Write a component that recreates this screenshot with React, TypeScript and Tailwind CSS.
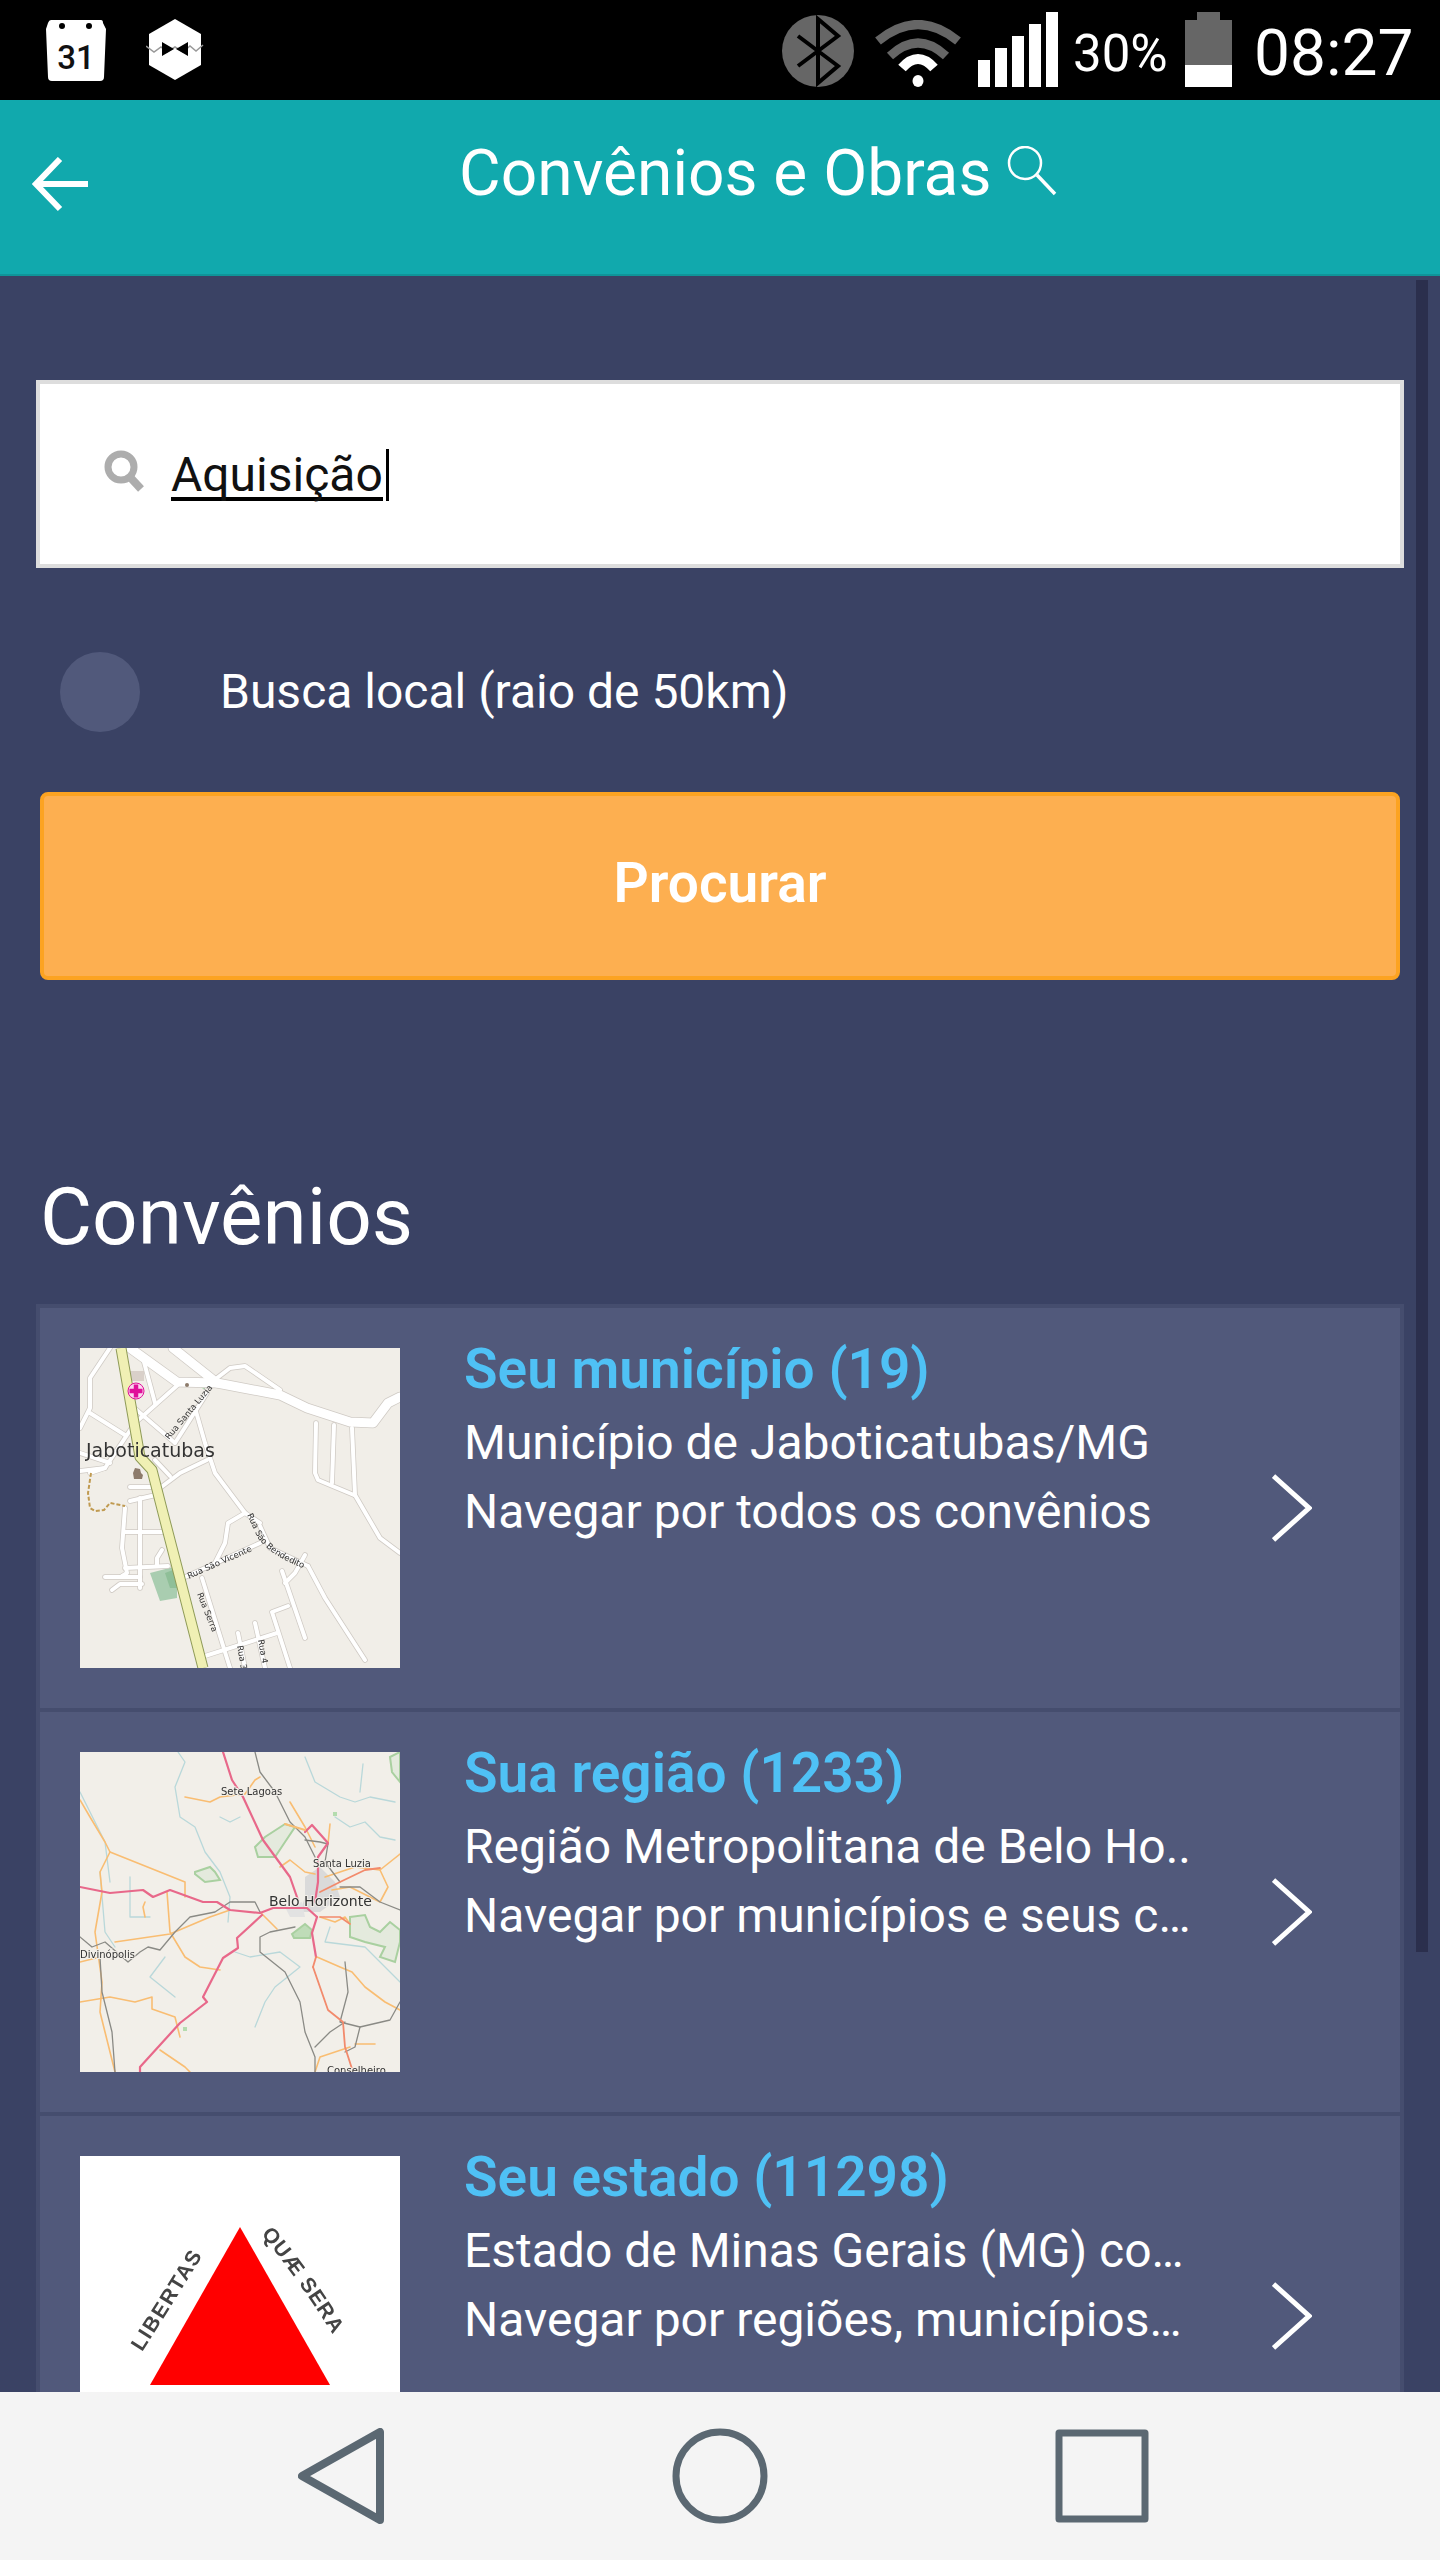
import React from "react";

const roboto = { fontFamily: "Roboto, 'Liberation Sans', sans-serif" };

function Calendar() {
  return (
    <svg width="62" height="62" viewBox="0 0 62 62" className="shrink-0">
      <path d="M6 1 H56 Q58 1 58 4 L61 10 L59 58 Q59 62 55 62 H7 Q3 62 3 58 L1 10 L3 4 Q4 1 6 1Z" fill="#fff" />
      <circle cx="17" cy="7" r="3" fill="#000" />
      <circle cx="44" cy="7" r="3" fill="#000" />
      <text x="31" y="50" textAnchor="middle" fontFamily="Roboto, sans-serif" fontWeight="500" fontSize="33" fill="#111">31</text>
    </svg>
  );
}

function Hex() {
  return (
    <svg width="58" height="64" viewBox="0 0 58 64" className="shrink-0">
      <path d="M29 1 L55 16 V47 L29 62 L3 47 V16Z" fill="#fff" />
      <path d="M0 26 L8 32 L15 27 L21 32 L29 27 L37 32 L44 26 L50 31 L57 25" fill="none" stroke="#999" strokeWidth="1.5" transform="translate(0 2)" />
      <path d="M16 24 L28 31 L16 38Z M42 24 L30 31 L42 38Z" fill="#000" />
    </svg>
  );
}

function Bluetooth() {
  return (
    <svg width="72" height="72" viewBox="0 0 72 72" className="shrink-0">
      <circle cx="36" cy="36" r="36" fill="#666" />
      <path d="M16 21 L56 51 L36 68 V4 L56 21 L16 51" fill="none" stroke="#000" strokeWidth="4" />
    </svg>
  );
}

function Wifi() {
  return (
    <svg width="88" height="67" viewBox="0 0 88 67" className="shrink-0">
      <path d="M4 21 Q44 -12 84 21" fill="none" stroke="#666" strokeWidth="9" />
      <path d="M16 36 Q44 10 72 36" fill="none" stroke="#666" strokeWidth="9" />
      <path d="M28 48 Q44 30 60 48" fill="none" stroke="#fff" strokeWidth="10" />
      <ellipse cx="44" cy="61" rx="5.5" ry="6" fill="#fff" />
    </svg>
  );
}

function Signal() {
  return (
    <div className="flex items-end gap-[5px] h-[75px] shrink-0">
      <div className="w-[12px] h-[27px] bg-white" />
      <div className="w-[12px] h-[39px] bg-white" />
      <div className="w-[12px] h-[51px] bg-white" />
      <div className="w-[12px] h-[63px] bg-white" />
      <div className="w-[12px] h-[75px] bg-white" />
    </div>
  );
}

function Battery() {
  return (
    <div className="flex flex-col items-center w-[47px] h-[75px] shrink-0">
      <div className="w-[23px] h-[8px] bg-[#666]" />
      <div className="w-full h-[45px] bg-[#666]" />
      <div className="w-full h-[22px] bg-white" />
    </div>
  );
}

type Line = [string, string, number];

function Map1() {
  const white: [string, number][] = [
    ["M50 0 L97 34 L137 35 L163 40 L200 47 L227 60 L270 74 L293 75 L308 55 L320 49", 9],
    ["M93 0 L127 27 L137 35", 9],
    ["M137 30 L150 20 L165 18 L200 42", 4],
    ["M30 0 L10 30 L10 60 L0 80", 4],
    ["M10 65 L45 87", 4],
    ["M64 14 L75 55", 4],
    ["M100 35 L55 75 L25 120 L10 125", 4],
    ["M52 58 L95 95", 4],
    ["M95 95 L127 45", 4],
    ["M115 60 L125 95 L135 125 L165 165 L180 175", 4],
    ["M0 105 L30 115", 4],
    ["M0 123 L25 120", 4],
    ["M75 112 L90 128", 4],
    ["M80 140 L100 125 L127 112", 4],
    ["M50 139 L72 139", 4],
    ["M50 153 L80 146", 4],
    ["M45 160 L42 200 L47 225 L42 228", 4],
    ["M60 150 L60 240", 4],
    ["M44 184 L82 184", 4],
    ["M45 220 L88 218", 4],
    ["M25 229 L60 229", 4],
    ["M32 242 L40 236 L62 236", 4],
    ["M82 202 L77 210 L77 218", 4],
    ["M165 165 L148 175 L145 195 L135 215", 4],
    ["M103 230 L180 195", 4],
    ["M122 230 L150 320", 4],
    ["M180 178 L190 200 L228 218", 4],
    ["M202 223 L225 290", 4],
    ["M225 207 L215 225 L205 235", 4],
    ["M228 218 L245 250 L285 312", 4],
    ["M208 258 L192 264 L210 320", 4],
    ["M125 308 L197 285", 4],
    ["M158 285 L165 320", 4],
    ["M175 275 L185 320", 4],
    ["M236 75 L235 125 L238 132 L274 147", 4],
    ["M254 77 L252 135", 4],
    ["M272 80 L275 147 L300 190 L320 205", 4],
  ];
  return (
    <svg width="320" height="320" viewBox="0 0 320 320" className="shrink-0 blur-[0.4px] bg-[#f1eee8]">
      <defs>
        <path id="bendedito" d="M167 167 L178 190 Q190 208 228 222" />
      </defs>
      <path d="M50 23 h14 v10 h-12z" fill="#d9d0c9" />
      <path d="M115 33 l10 -2 l6 7 l-8 3z" fill="#b8e8b8" />
      <path d="M70 225 L97 218 L97 250 L80 253 Z" fill="#a9cdb0" />
      <path d="M85 225 L93 222 L97 240 L90 240 Z" fill="#8fbf98" />
      {white.map(([d, w], i) => (
        <path key={"c" + i} d={d} fill="none" stroke="#cfcac4" strokeWidth={w + 1.5} strokeLinejoin="round" strokeLinecap="round" />
      ))}
      {white.map(([d, w], i) => (
        <path key={"w" + i} d={d} fill="none" stroke="#fff" strokeWidth={w} strokeLinejoin="round" strokeLinecap="round" />
      ))}
      <path d="M41 0 L50 52 L60 109 L72 122 L83 165 L97 219 L123 320" fill="none" stroke="#8f9b58" strokeWidth="11" strokeLinejoin="round" />
      <path d="M41 0 L50 52 L60 109 L72 122 L83 165 L97 219 L123 320" fill="none" stroke="#f0f0b4" strokeWidth="9" strokeLinejoin="round" />
      <path d="M11 125 L8 145 L10 160 L15 163 L24 162 L30 155 L45 158" fill="none" stroke="#c09a50" strokeWidth="2" strokeDasharray="4 2" />
      <path d="M55 120 l5 1 l1 4 l2 2 l-1 4 l-8 0 l-1 -6z" fill="#8d7b6b" />
      <circle cx="107" cy="37" r="2" fill="#8d7b6b" />
      <circle cx="56" cy="43" r="8" fill="#fbd8ef" stroke="#e0109a" strokeWidth="1" />
      <path d="M49.5 43 h13 M56 36.5 v13" stroke="#e0109a" strokeWidth="4.5" />
      <text x="6" y="109" fontFamily="'DejaVu Sans', sans-serif" fontSize="19" fill="#333">Jaboticatubas</text>
      <g fontFamily="'DejaVu Sans', sans-serif" fontSize="8.5" fill="#333">
        <text transform="translate(89 92) rotate(-50)">Rua Santa Luzia</text>
        <text><textPath href="#bendedito">Rua São Bendedito</textPath></text>
        <text transform="translate(109 231) rotate(-24)">Rua São Vicente</text>
        <text transform="translate(117 246) rotate(68)">Rua Serra</text>
        <text transform="translate(157 298) rotate(80)">Rua 3</text>
        <text transform="translate(178 292) rotate(80)">Rua 4</text>
      </g>
    </svg>
  );
}

function Map2() {
  const lines: Line[] = [
    ["M98 0 L105 10 L95 35 L100 65 L115 75 L125 100 L140 120 L150 145 L148 170", "#b9d8da", 1.3],
    ["M140 65 L150 70 L160 65", "#b9d8da", 1.3],
    ["M225 5 L235 30 L260 45 L275 50 L290 45 L315 50", "#b9d8da", 1.3],
    ["M283 12 L280 40", "#b9d8da", 1.3],
    ["M255 65 L270 75 L285 70 L300 85 L315 88", "#b9d8da", 1.3],
    ["M50 125 L50 165 L70 165", "#b9d8da", 1.3],
    ["M20 120 L25 180 L35 195", "#b9d8da", 1.3],
    ["M85 205 L70 225 L95 245", "#b9d8da", 1.3],
    ["M155 200 L170 205 L200 200 L220 215 L195 235 L185 250 L175 275", "#b9d8da", 1.3],
    ["M250 175 L245 190 L285 195 L320 230", "#b9d8da", 1.3],
    ["M0 40 L25 90 L30 130", "#b9d8da", 1.3],
    ["M0 48 L10 65 L25 90 L30 100 L60 112 L80 120 L105 130 L105 145", "#f9bd72", 1.6],
    ["M30 100 L20 120 L22 140 L15 180 L22 230 L20 260 L35 320", "#f9bd72", 1.6],
    ["M0 250 L30 245 L55 250 L72 245 L72 257 L95 265 L100 285", "#f9bd72", 1.6],
    ["M105 45 L115 47 L130 50 L140 45 L165 42 L175 28 L180 25", "#f9bd72", 1.6],
    ["M35 190 L90 182 L130 165 L150 158", "#f9bd72", 1.6],
    ["M87 140 L90 180 L105 205 L120 215 L140 218", "#f9bd72", 1.6],
    ["M65 150 L63 155 L65 165", "#f9bd72", 1.6],
    ["M0 210 L20 205", "#f9bd72", 1.6],
    ["M80 298 L105 315 L110 320", "#f9bd72", 1.6],
    ["M200 115 L210 108 L225 120 L235 122", "#f9bd72", 1.6],
    ["M245 125 L275 115 L300 118 L308 135 L300 150 L270 135 L252 138", "#f9bd72", 1.6],
    ["M300 118 L320 102", "#f9bd72", 1.6],
    ["M237 205 L260 215 L272 220 L285 235 L305 250 L320 258", "#f9bd72", 1.6],
    ["M240 165 L255 170 L265 165 L270 172", "#f9bd72", 1.6],
    ["M180 160 L190 170 L197 177", "#f9bd72", 1.6],
    ["M210 50 L225 75 L235 95", "#f9bd72", 1.6],
    ["M250 72 L248 92", "#f9bd72", 1.6],
    ["M235 320 L240 305 L270 295", "#f9bd72", 1.6],
    ["M275 292 L295 292", "#f9bd72", 1.6],
    ["M175 0 L180 20 L195 40 L210 70 L225 85 L235 105", "#8a8a85", 1.3],
    ["M0 185 L12 195 L25 190 L48 210 L60 200 L68 195 L80 198 L95 180 L110 165 L135 160 L150 150 L175 150 L180 160", "#8a8a85", 1.3],
    ["M20 205 L22 240 L32 280 L35 320", "#8a8a85", 1.3],
    ["M215 175 L190 180 L180 185 L180 200 L205 220 L220 250 L225 280 L235 305 L235 320", "#8a8a85", 1.3],
    ["M265 210 L268 240 L260 270 L280 275 L310 268 L320 250", "#8a8a85", 1.3],
    ["M235 295 L250 280 L265 270", "#8a8a85", 1.3],
    ["M280 275 L275 295 L265 300", "#8a8a85", 1.3],
    ["M260 135 L280 135 L300 150 L320 158", "#8a8a85", 1.3],
    ["M225 88 L240 90 L248 92 L245 110 L260 130", "#8a8a85", 1.3],
    ["M143 0 L152 28 L163 45 L183 88 L210 125 L218 148", "#e8688a", 2.2],
    ["M0 135 L30 141 L63 138 L73 145 L90 138 L123 150 L137 150 L150 158 L180 161 L193 156 L227 156 L237 165", "#e8688a", 2.2],
    ["M182 163 L157 186 L158 196 L143 206 L123 245 L127 250 L100 271 L60 315 L60 320", "#e8688a", 2.2],
    ["M237 165 L232 181 L236 205", "#e8688a", 2.2],
    ["M225 80 L232 73 L248 91 L238 105 L238 130 L235 150", "#e8688a", 2.2],
    ["M205 72 L225 78", "#f9bd72", 2],
    ["M240 140 L260 130 L285 118 L300 116", "#f28a6c", 1.8],
    ["M233 215 L248 258 L263 270 L265 295 L273 320", "#f28a6c", 1.8],
    ["M236 205 L233 215", "#f28a6c", 1.8],
    ["M240 165 L260 165 L270 172", "#f28a6c", 1.6],
  ];
  return (
    <svg width="320" height="320" viewBox="0 0 320 320" className="shrink-0 blur-[0.4px] bg-[#f2efe9]">
      <g fill="#e4eadd" stroke="#a9d0a0" strokeWidth="2">
        <path d="M175 95 L185 85 L205 72 L215 75 L205 90 L195 105 L190 105 L178 105Z" />
        <path d="M115 120 L130 115 L135 120 L140 128 L125 130 L115 122Z" />
        <path d="M270 165 L285 163 L290 175 L300 180 L310 170 L320 178 L320 190 L315 210 L300 205 L305 195 L285 190 L270 185Z" />
        <path d="M212 182 L225 172 L232 178 L230 186 L214 186Z" fill="#bfdcb8" />
        <path d="M310 5 L320 0 L320 30 L312 20Z" />
      </g>
      <path d="M225 125 L240 115 L255 130 L260 145 L240 160 L220 160 L225 145Z" fill="#dadada" />
      <path d="M205 155 L222 150 L225 165 L210 165Z" fill="#e2e2e2" />
      <path d="M103 275 h4 v4 h-4z M253 60 h4 v4 h-4z" fill="#b4dcae" />
      {lines.map(([d, c, w], i) => (
        <path key={i} d={d} fill="none" stroke={c} strokeWidth={w} strokeLinejoin="round" strokeLinecap="round" />
      ))}
      <g fontFamily="'DejaVu Sans', sans-serif" fill="#333" stroke="#f2efe9" strokeWidth="2" paintOrder="stroke">
        <text x="141" y="43" fontSize="10">Sete Lagoas</text>
        <text x="233" y="115" fontSize="10">Santa Luzia</text>
        <text x="189" y="154" fontSize="14">Belo Horizonte</text>
        <text x="0" y="206" fontSize="10">Divinópolis</text>
        <text x="247" y="322" fontSize="10">Conselheiro</text>
      </g>
    </svg>
  );
}

function Map3() {
  return (
    <svg width="320" height="320" viewBox="0 0 320 320" className="shrink-0 bg-white">
      <path d="M160 71 L250 229 H70Z" fill="#f00" className="blur-[0.4px]" />
      <defs>
        <path id="libertas" d="M62 196 Q96 143 132 84" />
        <path id="quae" d="M181 78 Q228 135 270 207" />
      </defs>
      <g fontFamily="'Liberation Sans', sans-serif" fontSize="21" fontWeight="700" fill="#444" className="blur-[0.7px]">
        <text letterSpacing="1.5"><textPath href="#libertas">LIBERTAS</textPath></text>
        <text letterSpacing="1"><textPath href="#quae">QUÆ SERA</textPath></text>
        <text x="160" y="250" textAnchor="middle" letterSpacing="3">TAMEN</text>
      </g>
    </svg>
  );
}

function Chevron() {
  return (
    <svg width="40" height="68" viewBox="0 0 40 68" className="shrink-0">
      <path d="M1.5 2 L37 34 L1.5 66" fill="none" stroke="#fff" strokeWidth="5" />
    </svg>
  );
}

function Card({ map, title, l1, l2, first }: { map: React.ReactNode; title: string; l1: string; l2: string; first?: boolean }) {
  return (
    <div className={first ? "flex h-[400px] bg-[#51597b] pl-[40px] shrink-0" : "flex h-[400px] bg-[#51597b] pl-[40px] mt-[4px] shrink-0"}>
      <div className="pt-[40px]">{map}</div>
      <div className="flex flex-col pl-[64px] pt-[25px] w-[872px] text-[48px] text-white whitespace-nowrap">
        <div className="text-[#4fc1f5] font-semibold text-[55px] leading-[72px]">{title}</div>
        <div className="leading-[75px]">{l1}</div>
        <div className="leading-[63px]">{l2}</div>
      </div>
      <div className="flex items-center">
        <Chevron />
      </div>
    </div>
  );
}

export default function App() {
  return (
    <div className="w-[1440px] h-[2560px] flex flex-col overflow-hidden bg-[#3a4264]" style={roboto}>
      <div className="h-[100px] bg-black flex items-center justify-between pl-[45px] pr-[30px] shrink-0">
        <div className="flex items-center gap-[39px]">
          <Calendar />
          <Hex />
        </div>
        <div className="flex items-end h-[75px] mt-[-1px] text-white">
          <div className="self-end"><Bluetooth /></div>
          <div className="ml-[20px] self-end"><Wifi /></div>
          <div className="ml-[16px]"><Signal /></div>
          <div className="ml-[15px] self-center text-[51px] leading-[52px] w-[94px] text-center mt-[8px]">30%</div>
          <div className="ml-[18px]"><Battery /></div>
          <div className="ml-[22px] self-center text-[64px] leading-[64px] mt-[8px] w-[156px] text-center whitespace-nowrap">08:27</div>
        </div>
      </div>

      <div className="h-[176px] bg-[#11a9ad] border-b-2 border-[#0f9599] flex items-start pl-[32px] shrink-0">
        <svg width="56" height="56" viewBox="0 0 56 56" className="mt-[57px] shrink-0">
          <path d="M28 2 L4 27 L28 52 M4 27 H56" fill="none" stroke="#fff" strokeWidth="6" />
        </svg>
        <div className="ml-[371px] mt-[39px] text-[64px] leading-[70px] text-white whitespace-nowrap">Convênios e Obras</div>
        <svg width="50" height="50" viewBox="0 0 50 50" className="ml-[16px] mt-[46px] shrink-0">
          <circle cx="18" cy="17" r="16" fill="none" stroke="#fff" strokeWidth="2.5" />
          <path d="M30 29 L48 48" stroke="#fff" strokeWidth="3.5" fill="none" />
        </svg>
      </div>

      <main className="relative flex-1 overflow-hidden">
        <div className="absolute left-[1416px] top-[4px] w-[12px] h-[1672px] bg-[#2b2f4d]" />
        <div className="w-[1368px] ml-[36px] pt-[104px] flex flex-col">
          <div className="h-[188px] bg-white border-4 border-[#dddddd] flex items-center pl-[64px]">
            <svg width="42" height="42" viewBox="0 0 42 42" className="shrink-0 mt-[-6px]">
              <circle cx="17" cy="17" r="13" fill="none" stroke="#adadad" strokeWidth="7" />
              <path d="M25 26 L37 39" stroke="#adadad" strokeWidth="8" fill="none" />
            </svg>
            <div className="relative ml-[25px] h-[52px] mt-[2px] flex items-start">
              <span className="text-[48px] leading-[52px] text-[#111] border-b-4 border-black h-[52px] block">Aquisição</span>
              <span className="w-[3px] h-[52px] bg-black ml-[3px] block" />
            </div>
          </div>
          <div className="flex items-center h-[80px] mt-[84px] pl-[24px]">
            <div className="w-[80px] h-[80px] rounded-full bg-[#51597b] shrink-0" />
            <div className="ml-[80px] text-[48px] leading-[60px] text-white">Busca local (raio de 50km)</div>
          </div>
          <div className="mx-[4px] mt-[60px] h-[188px] bg-[#fdaf50] border-4 border-[#fca321] rounded-[8px] flex items-center justify-center text-white font-semibold text-[55px] pb-[6px]">
            Procurar
          </div>
          <div className="pl-[4px] mt-[187px] text-[80px] leading-[100px] text-white">Convênios</div>
          <div className="mt-[37px] border-4 border-[#454d6e] flex flex-col bg-[#454d6e]">
            <Card first map={<Map1 />} title="Seu município (19)" l1="Município de Jaboticatubas/MG" l2="Navegar por todos os convênios" />
            <Card map={<Map2 />} title="Sua região (1233)" l1="Região Metropolitana de Belo Ho.." l2="Navegar por municípios e seus c…" />
            <Card map={<Map3 />} title="Seu estado (11298)" l1="Estado de Minas Gerais (MG) co…" l2="Navegar por regiões, municípios…" />
          </div>
        </div>
      </main>

      <div className="h-[168px] bg-[#f4f4f4] flex items-center shrink-0 pl-[298px]">
        <svg width="86" height="96" viewBox="0 0 86 96" className="shrink-0">
          <path d="M4 48 L82 4 V92Z" fill="none" stroke="#5b6872" strokeWidth="8" strokeLinejoin="round" />
        </svg>
        <svg width="96" height="96" viewBox="0 0 96 96" className="ml-[288px] shrink-0">
          <circle cx="48" cy="48" r="44" fill="none" stroke="#5b6872" strokeWidth="7" />
        </svg>
        <svg width="94" height="94" viewBox="0 0 94 94" className="ml-[287px] shrink-0">
          <path d="M4 4 H90 V90 H4Z" fill="none" stroke="#5b6872" strokeWidth="7" strokeLinejoin="round" />
        </svg>
      </div>
    </div>
  );
}
